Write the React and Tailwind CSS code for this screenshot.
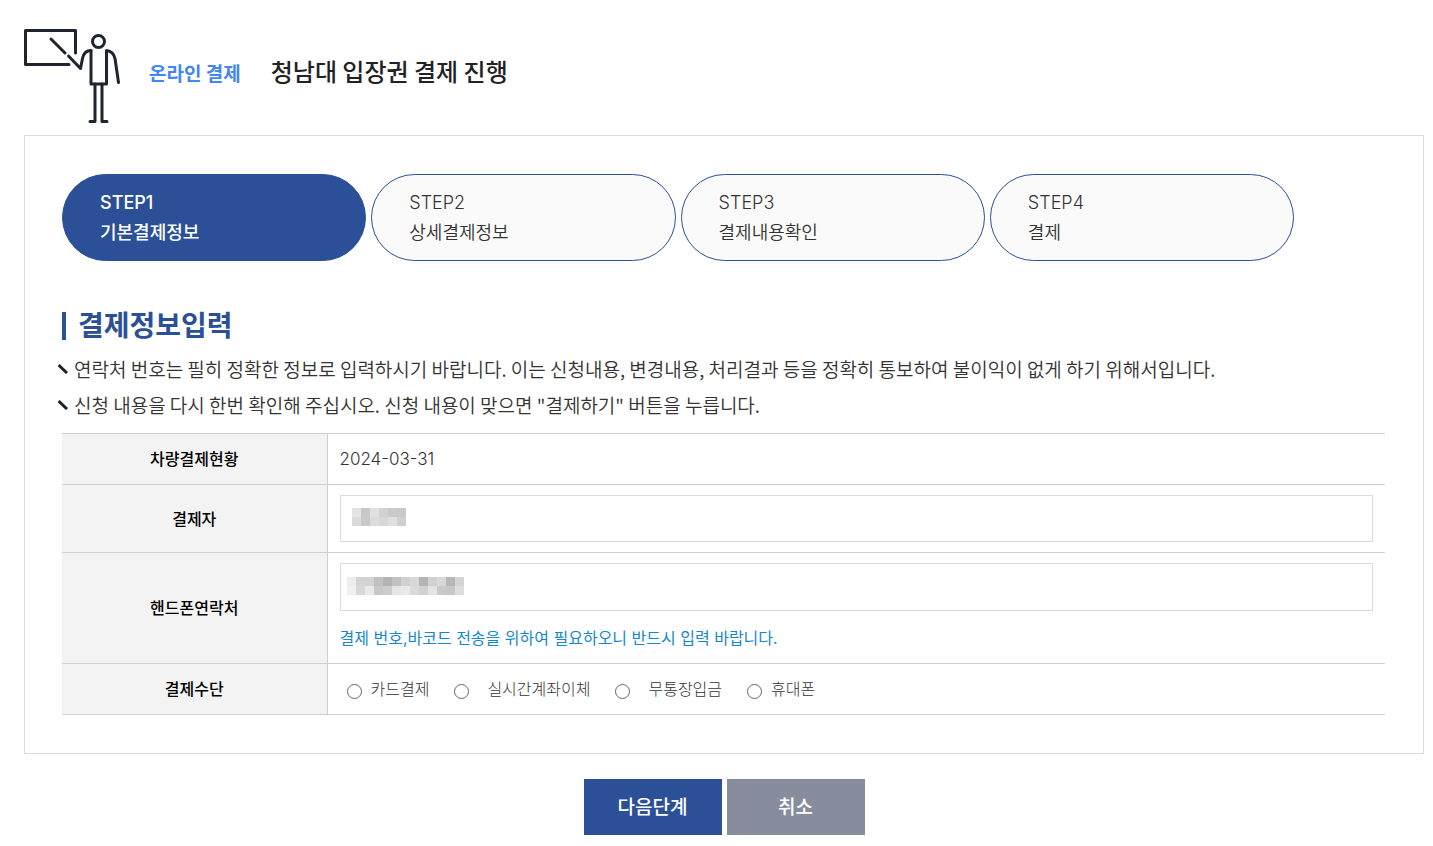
import { useState } from "react";

const STEPS = [
  { no: "STEP1", name: "기본결제정보" },
  { no: "STEP2", name: "상세결제정보" },
  { no: "STEP3", name: "결제내용확인" },
  { no: "STEP4", name: "결제" },
];

const NOTICES = [
  "연락처 번호는 필히 정확한 정보로 입력하시기 바랍니다. 이는 신청내용, 변경내용, 처리결과 등을 정확히 통보하여 불이익이 없게 하기 위해서입니다.",
  '신청 내용을 다시 한번 확인해 주십시오. 신청 내용이 맞으면 "결제하기" 버튼을 누릅니다.',
];

const METHODS = [
  { id: "card", label: "카드결제", gap: "gap-[9px]" },
  { id: "transfer", label: "실시간계좌이체", gap: "gap-[18px]" },
  { id: "deposit", label: "무통장입금", gap: "gap-[18px]" },
  { id: "mobile", label: "휴대폰", gap: "gap-[9px]" },
];

// masked values, one grey per block, two rows each
const NAME_MASK = [
  ["#e4e4e4", "#c8c8c8", "#e0e0e0", "#d2d2d2", "#cacaca", "#c8c8c8"],
  ["#dadada", "#c8c8c8", "#dcdcdc", "#d8d8d8", "#e0e0e0", "#d0d0d0"],
];
const PHONE_MASK = [
  ["#ececec", "#d3d3d3", "#d3d3d3", "#c1c1c1", "#b3b3b3", "#c1c1c1", "#d1d1d1", "#d8d8d8", "#b4b4b4", "#d1d1d1", "#d8d8d8", "#b7b7b7", "#d4d4d4"],
  ["#f0f0f0", "#d8d8d8", "#e9e9e9", "#c8c8c8", "#cccccc", "#e5e5e5", "#e9e9e9", "#dadada", "#d1d1d1", "#e3e3e3", "#cacaca", "#c8c8c8", "#dedede"],
];

function PresenterIcon() {
  return (
    <svg
      width="97"
      height="95"
      viewBox="24 29 97 95"
      fill="none"
      stroke="#20242f"
      strokeWidth="3"
      strokeLinecap="round"
      strokeLinejoin="round"
      className="shrink-0"
      aria-hidden="true"
    >
      <path d="M75.500 53V30.500h-50v34H69" />
      <path d="M51 39l14 14M68.500 56l12 12.500 2-10c1-5 3.500-8 8.500-8" />
      <circle cx="98.500" cy="41.500" r="6" />
      <path d="M91 50.500V84h15.500V50.500c4.500.5 7.500 3.500 8.500 8l3.500 24" />
      <path d="M95 84v37.500h-5M102 84v37.500h5" />
    </svg>
  );
}

function Mask({ rows, className }) {
  return (
    <div className={`absolute ${className}`} aria-hidden="true">
      {rows.map((row, i) => (
        <div key={i} className="flex">
          {row.map((color, j) => (
            <span key={j} className="w-[9px] h-[9px]" style={{ background: color }} />
          ))}
        </div>
      ))}
    </div>
  );
}

function Row({ label, htmlFor, children }) {
  return (
    <tr className="border-b border-[#cdd0d2]">
      <th
        scope="row"
        className="w-[265px] bg-[#f3f3f3] border-r border-[#cdd0d2] font-medium text-black text-center"
      >
        {htmlFor ? <label htmlFor={htmlFor}>{label}</label> : label}
      </th>
      <td className="px-3 py-[10px]">{children}</td>
    </tr>
  );
}

export default function App() {
  const [method, setMethod] = useState("");

  return (
    <div className="pt-[29px] pl-6 pr-[9px] pb-[11px] bg-white text-[#333] font-['Inter','Noto_Sans_CJK_KR',sans-serif]">
      <header className="flex items-center font-['Noto_Sans_CJK_KR',sans-serif]">
        <PresenterIcon />
        <p className="ml-7 mb-[7px] text-[19px] leading-7 font-bold text-[#4285f4]">온라인 결제</p>
        <h1 className="ml-[30px] mb-3 text-2xl font-medium text-[#222]">청남대 입장권 결제 진행</h1>
      </header>

      <form onSubmit={(e) => e.preventDefault()}>
        <div className="mt-[11px] border border-[#dcdcdc] pl-[37px] pr-[38px] py-[38px]">
          <ol className="flex gap-[5px]">
            {STEPS.map((step, i) => (
              <li
                key={step.no}
                className={`w-[23%] rounded-full border border-[#2b5097] px-[37px] pt-[13px] pb-3 text-lg leading-[30px] ${
                  i === 0 ? "bg-[#2b5097] text-white font-medium" : "bg-[#fafafa] font-[350]"
                }`}
              >
                <span className="block">{step.no}</span>
                <span className="block">{step.name}</span>
              </li>
            ))}
          </ol>

          <h2 className="mt-12 flex items-center gap-3 text-[28px] leading-[34px] font-bold text-[#2b5097]">
            <span className="w-1 h-7 bg-[#2b5097]" />
            결제정보입력
          </h2>

          <ul className="mt-2 -ml-1 text-[19px] leading-9 font-[350] font-['Noto_Sans_CJK_KR',sans-serif]">
            {NOTICES.map((text) => (
              <li key={text} className="flex items-center gap-[6px]">
                <svg width="10" height="10" viewBox="0 0 10 10" stroke="#1c2230" strokeWidth="3" className="shrink-0">
                  <path d="M.5 1l8.500 8" />
                </svg>
                {text}
              </li>
            ))}
          </ul>

          <table className="mt-[10px] w-full border-collapse border-t border-[#cdd0d2] text-base">
            <tbody>
              <Row label="차량결제현황">
                <span className="block text-[17px] leading-[30px] font-[350]">2024-03-31</span>
              </Row>
              <Row label="결제자" htmlFor="payer">
                <div className="relative">
                  <input id="payer" type="text" className="block w-full h-[47px] px-3 border border-[#dcdcdc] outline-none" />
                  <Mask rows={NAME_MASK} className="left-3 top-[13px]" />
                </div>
              </Row>
              <Row label="핸드폰연락처" htmlFor="phone">
                <div className="relative">
                  <input id="phone" type="tel" className="block w-full h-12 px-3 border border-[#dcdcdc] outline-none" />
                  <Mask rows={PHONE_MASK} className="left-[7px] top-[14px]" />
                </div>
                <p className="mt-3 leading-[30px] text-[#1587cb]">
                  결제 번호,바코드 전송을 위하여 필요하오니 반드시 입력 바랍니다.
                </p>
              </Row>
              <Row label="결제수단">
                <div className="flex gap-[25px] pl-[7px] font-light leading-[30px]">
                  {METHODS.map((m) => (
                    <label key={m.id} className={`flex items-center ${m.gap}`}>
                      <input
                        type="radio"
                        name="method"
                        value={m.id}
                        checked={method === m.id}
                        onChange={() => setMethod(m.id)}
                        className="mt-1 w-[15px] h-[15px] appearance-none rounded-full border border-[#666] checked:border-4"
                      />
                      {m.label}
                    </label>
                  ))}
                </div>
              </Row>
            </tbody>
          </table>
        </div>

        <div className="mt-[25px] flex justify-center gap-[5px] text-[19px] font-medium text-white">
          <button type="submit" className="w-[138px] h-14 pt-0.5 bg-[#2b5097]">
            다음단계
          </button>
          <button type="button" className="w-[138px] h-14 pt-0.5 bg-[#878d9c]">
            취소
          </button>
        </div>
      </form>
    </div>
  );
}
